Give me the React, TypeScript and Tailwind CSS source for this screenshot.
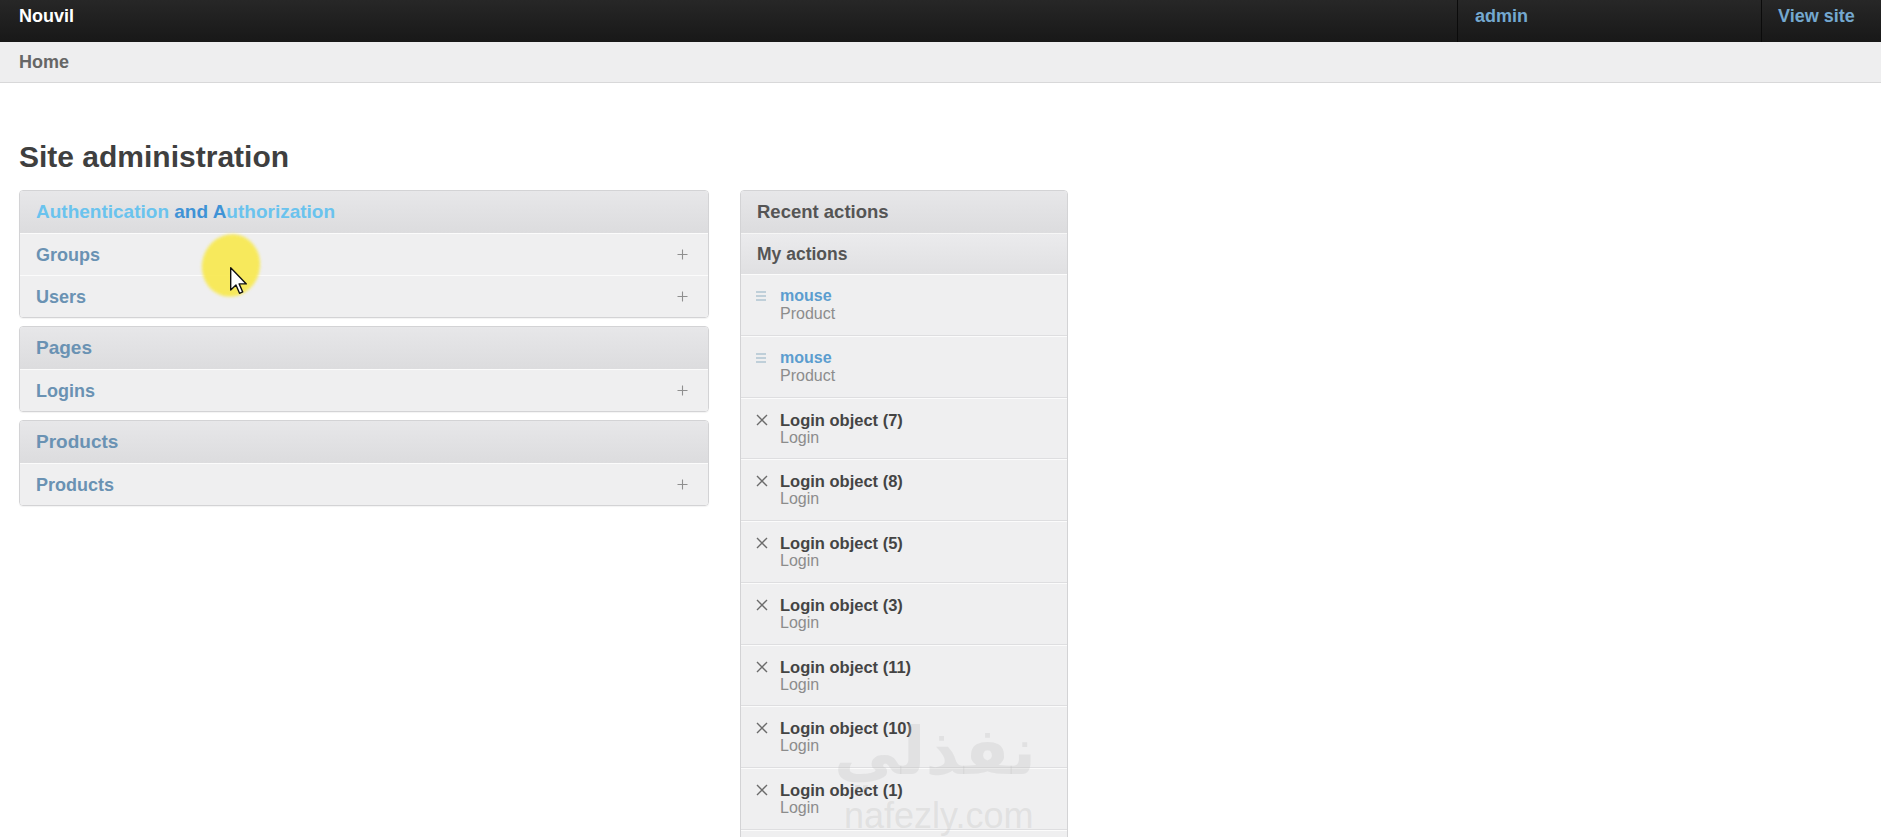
import React from 'react';

type ModuleDef = { title: string; rows: string[] };

const modules: ModuleDef[] = [
  { title: 'Authentication and Authorization', rows: ['Groups', 'Users'] },
  { title: 'Pages', rows: ['Logins'] },
  { title: 'Products', rows: ['Products'] },
];

type Action = { name: string; type: string; kind: 'change' | 'delete' };

const actions: Action[] = [
  { name: 'mouse', type: 'Product', kind: 'change' },
  { name: 'mouse', type: 'Product', kind: 'change' },
  { name: 'Login object (7)', type: 'Login', kind: 'delete' },
  { name: 'Login object (8)', type: 'Login', kind: 'delete' },
  { name: 'Login object (5)', type: 'Login', kind: 'delete' },
  { name: 'Login object (3)', type: 'Login', kind: 'delete' },
  { name: 'Login object (11)', type: 'Login', kind: 'delete' },
  { name: 'Login object (10)', type: 'Login', kind: 'delete' },
  { name: 'Login object (1)', type: 'Login', kind: 'delete' },
  { name: 'Login object (2)', type: 'Login', kind: 'delete' },
];

function PlusIcon() {
  return (
    <svg width="11" height="11" viewBox="0 0 11 11">
      <path d="M5.5 0.5v10M0.5 5.5h10" stroke="#8f8f8f" strokeWidth="1.1" />
    </svg>
  );
}

function ChangeIcon() {
  return (
    <svg width="10" height="10" viewBox="0 0 10 10">
      <path d="M0 1h10M0 5h10M0 9h10" stroke="#8fb0c2" strokeWidth="1.2" />
    </svg>
  );
}

function DeleteIcon() {
  return (
    <svg width="12" height="12" viewBox="0 0 12 12">
      <path d="M1 1l10 10M11 1L1 11" stroke="#6b6b6b" strokeWidth="1.4" />
    </svg>
  );
}

function Caption({ title }: { title: string }) {
  if (title === 'Authentication and Authorization') {
    return (
      <span className="text-[#6ac3ee]">
        Authentication <span className="text-[#3f93d6]">and A</span>uthorization
      </span>
    );
  }
  return <span className="text-[#6a92b3]">{title}</span>;
}

export default function App() {
  return (
    <div className="relative min-h-screen bg-white font-['Liberation_Sans',Arial,sans-serif] overflow-hidden">
      {/* Header */}
      <div className="flex h-[42px] bg-gradient-to-b from-[#272727] to-[#181818] text-[18px] font-bold leading-[18px]">
        <div className="flex-1 pl-[19px] pt-[7px] text-white">Nouvil</div>
        <div className="w-[304px] border-l border-[#0b0b0b] pl-[17px] pt-[7px] text-[#74a8cf]">admin</div>
        <div className="w-[120px] border-l border-[#0b0b0b] pl-[16px] pt-[7px] text-[#74a8cf]">View site</div>
      </div>

      {/* Breadcrumbs */}
      <div className="h-[41px] border-b border-[#d8d8d9] bg-[#eeeeef] pl-[19px] pt-[11px] text-[18px] font-bold leading-[18px] text-[#666]">
        Home
      </div>

      <div className="px-[19px]">
        <h1 className="mt-[57px] mb-[16px] text-[30px] font-bold leading-[34px] text-[#3f3f3f]">Site administration</h1>

        <div className="flex items-start gap-[31px]">
          {/* App list */}
          <div className="flex w-[690px] flex-col gap-[8px]">
            {modules.map((m) => (
              <div
                key={m.title}
                className="overflow-hidden rounded-[4px] border border-[#d3d3d5] shadow-[0_1px_1px_rgba(0,0,0,0.05)]"
              >
                <div className="flex h-[42px] items-center bg-gradient-to-b from-[#e7e7e9] to-[#dcdcde] px-[16px] text-[19px] font-bold leading-[22px]">
                  <Caption title={m.title} />
                </div>
                {m.rows.map((r) => (
                  <div
                    key={r}
                    className="flex h-[42px] items-center justify-between border-t border-[#fbfbfb] bg-[#efeff0] pl-[16px] pr-[20px] text-[18px] font-bold leading-[22px] text-[#6a92b3]"
                  >
                    <span>{r}</span>
                    <PlusIcon />
                  </div>
                ))}
              </div>
            ))}
          </div>

          {/* Recent actions */}
          <div className="w-[328px] overflow-hidden rounded-t-[4px] border border-[#d3d3d5]">
            <div className="flex h-[42px] items-center bg-gradient-to-b from-[#e7e7e9] to-[#dcdcde] px-[16px] text-[18.5px] font-bold leading-[22px] text-[#555]">
              Recent actions
            </div>
            <div className="flex h-[41px] items-center border-t border-[#f6f6f6] bg-gradient-to-b from-[#ebebed] to-[#e0e0e2] px-[16px] text-[17.5px] font-bold leading-[22px] text-[#555]">
              My actions
            </div>
            {actions.map((a, i) => (
              <div
                key={i}
                className="flex h-[61.75px] border-t border-[#fbfbfb] bg-[#efeff0] pl-[15px] pt-[12px] shadow-[inset_0_-1px_0_#dedee0]"
              >
                <div className="flex h-[18px] w-[24px] items-center">
                  {a.kind === 'change' ? <ChangeIcon /> : <DeleteIcon />}
                </div>
                <div className="flex flex-col leading-[18px]">
                  <span
                    className={
                      a.kind === 'change'
                        ? 'text-[16px] font-bold text-[#5b9dcf]'
                        : 'text-[16.5px] font-bold text-[#444]'
                    }
                  >
                    {a.name}
                  </span>
                  <span className="text-[16px] text-[#8c8c8c]">{a.type}</span>
                </div>
              </div>
            ))}
          </div>
        </div>
      </div>

      {/* Screen-recording cursor highlight */}
      <div className="pointer-events-none absolute left-[202px] top-[234px] h-[63px] w-[58px] rotate-[15deg] rounded-[50%] bg-[#f8e94c] opacity-90 blur-[1.5px]" />
      <svg
        className="pointer-events-none absolute left-[230px] top-[267px]"
        width="18"
        height="28"
        viewBox="0 0 13 20"
      >
        <path d="M0.5 0.5v16l3.8-3.6 2.6 6 2.3-1-2.6-5.8h5.2z" fill="#fff" stroke="#111" strokeWidth="1" strokeLinejoin="round" />
      </svg>

      {/* Video watermark */}
      <div className="pointer-events-none absolute left-[834px] top-[712px] font-['DejaVu_Sans',sans-serif] text-[66px] font-bold leading-[80px] text-[rgba(190,190,190,0.28)]">
        نفذلي
      </div>
      <div className="pointer-events-none absolute left-[844px] top-[798px] font-['Liberation_Sans',sans-serif] text-[36px] leading-[36px] text-[rgba(190,190,190,0.3)]">
        nafezly.com
      </div>
    </div>
  );
}
